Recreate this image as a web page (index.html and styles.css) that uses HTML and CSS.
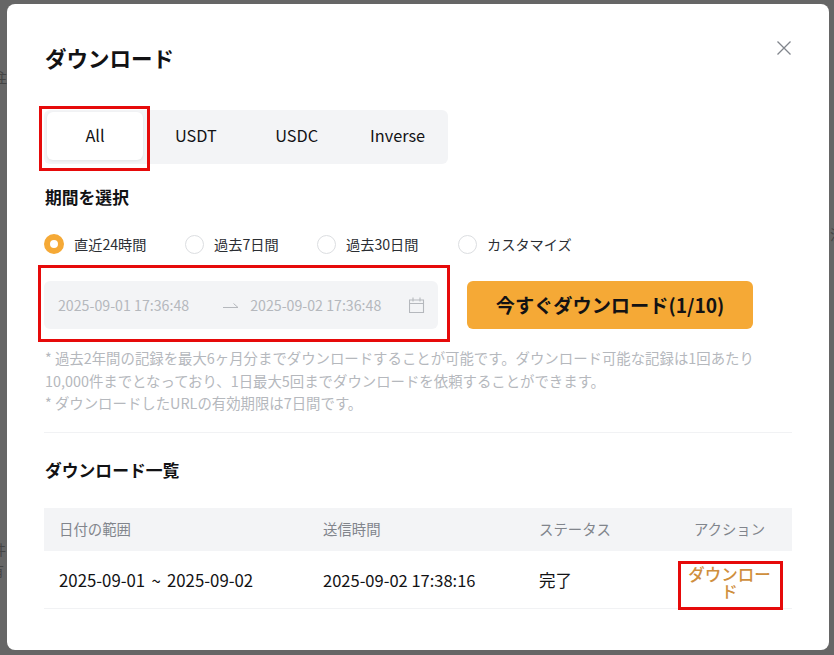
FILE: index.html
```html
<!DOCTYPE html>
<html lang="ja">
<head>
    <meta charset="UTF-8">
    <meta name="viewport" content="width=device-width, initial-scale=1.0">
    <title>ダウンロード</title>
    <link rel="stylesheet" href="styles.css">
</head>
<body>

<div class="backdrop-text text-a">注</div>
<div class="backdrop-text text-b">注</div>
<div class="backdrop-text text-c">件</div>
<div class="backdrop-text text-d">有</div>

<div class="modal">
    <button class="close" aria-label="閉じる">
        <svg width="16" height="16" viewBox="0 0 16 16"><path d="M1.5 1.5l13 13M14.500 1.500l-13 13" stroke="#81858c" stroke-width="1.300" fill="none"/></svg>
    </button>

    <h1 class="title">ダウンロード</h1>

    <div class="tabs">
        <div class="tab active">All</div>
        <div class="tab">USDT</div>
        <div class="tab">USDC</div>
        <div class="tab">Inverse</div>
    </div>

    <h2 class="section-label">期間を選択</h2>

    <div class="radios">
        <label class="radio radio-24"><span class="dot on"></span>直近24時間</label>
        <label class="radio radio-7"><span class="dot"></span>過去7日間</label>
        <label class="radio radio-30"><span class="dot"></span>過去30日間</label>
        <label class="radio"><span class="dot"></span>カスタマイズ</label>
    </div>

    <div class="range-row">
        <div class="range">
            <span class="range-date">2025-09-01 17:36:48</span>
            <svg class="range-arrow" width="16" height="8" viewBox="0 0 16 8"><path d="M0 6.500h15L10.500 2.500" stroke="#b5b8bd" fill="none"/></svg>
            <span class="range-date">2025-09-02 17:36:48</span>
            <svg class="range-cal" width="16" height="16" viewBox="0 0 16 16"><path d="M.5 3h14v12.500H.5zM.5 6.500h14M4 .5v4M11 .5v4" stroke="#b5b8bd" stroke-width="1.100" fill="none"/></svg>
        </div>
        <button class="download-now">今すぐダウンロード(1/10)</button>
    </div>

    <p class="note">* 過去2年間の記録を最大6ヶ月分までダウンロードすることが可能です。ダウンロード可能な記録は1回あたり<br>10,000件までとなっており、1日最大5回までダウンロードを依頼することができます。<br>* ダウンロードしたURLの有効期限は7日間です。</p>

    <div class="divider"></div>

    <h2 class="list-title">ダウンロード一覧</h2>

    <table class="history">
        <thead>
            <tr>
                <th class="col-range">日付の範囲</th>
                <th class="col-sent">送信時間</th>
                <th class="col-status">ステータス</th>
                <th class="col-action">アクション</th>
            </tr>
        </thead>
        <tbody>
            <tr>
                <td class="date-range">2025-09-01 ~ 2025-09-02</td>
                <td>2025-09-02 17:38:16</td>
                <td>完了</td>
                <td class="col-action"><a class="action-link">ダウンロード</a></td>
            </tr>
        </tbody>
    </table>
</div>

<!-- 赤枠の注釈 -->
<div class="mark mark-tab"></div>
<div class="mark mark-range"></div>
<div class="mark mark-action"></div>

</body>
</html>
```

FILE: styles.css
```css
html, body {
    height: 100%;
}
body {
    margin: 0;
    overflow: hidden;
    position: relative;
    background-color: #666;
    color: #121214;
    font-family: "Noto Sans CJK JP", "Noto Sans", sans-serif;
    padding: 4px 5px 5px 7px;
    box-sizing: border-box;
}
.backdrop-text {
    position: absolute;
    font-size: 14px;
    line-height: 18px;
    color: #444;
}
.text-a { left: -7px; top: 68px; }
.text-b { right: -10px; top: 225px; }
.text-c { left: -8px; top: 540px; }
.text-d { left: -10px; top: 561px; }

.modal {
    position: relative;
    height: 646px;
    box-sizing: border-box;
    padding: 34px 37px 0 37px;
    background-color: #fff;
    border-radius: 8px;
}
.close {
    position: absolute;
    top: 36px;
    right: 37px;
    padding: 0;
    border: none;
    background: none;
    cursor: pointer;
    line-height: 0;
}
.title {
    margin: 0 0 0 1px;
    font-size: 21.500px;
    line-height: 40px;
    font-weight: 700;
}
.tabs {
    display: flex;
    width: 404px;
    height: 54px;
    margin-top: 32px;
    padding: 2px 0 4px;
    box-sizing: border-box;
    background-color: #f3f4f6;
    border-radius: 6px;
}
.tab {
    flex: 1;
    display: flex;
    align-items: center;
    justify-content: center;
    padding-bottom: 2px;
    font-size: 16.300px;
    border-radius: 6px;
}
.active {
    flex: 0 0 96px;
    margin: 0 2.500px 0 3px;
    background-color: #fff;
    box-shadow: 0 1px 3px rgba(0, 0, 0, 0.08);
}
.section-label {
    margin: 21px 0 0 1px;
    font-size: 16.800px;
    line-height: 24px;
    font-weight: 700;
}
.radios {
    display: flex;
    margin-top: 25px;
    height: 20px;
}
.radio {
    display: flex;
    align-items: center;
    gap: 10px;
    font-size: 14.200px;
    color: #2b2e33;
}
.radio-24 { width: 141px; }
.radio-7 { width: 132px; }
.radio-30 { width: 141px; }
.dot {
    width: 19px;
    height: 19px;
    box-sizing: border-box;
    border: 1px solid #dcdee1;
    border-radius: 50%;
}
.dot.on {
    width: 20px;
    height: 20px;
    border: 6px solid #f5a936;
    background-color: #fff;
}
.range-row {
    display: flex;
    align-items: center;
    gap: 29px;
    margin-top: 27px;
}
.range {
    display: flex;
    align-items: center;
    width: 394px;
    height: 48px;
    padding: 0 13px 0 14px;
    box-sizing: border-box;
    background-color: #f3f4f6;
    border-radius: 6px;
    font-size: 14.200px;
    color: #b5b8bd;
}
.range-arrow {
    margin: 0 11px 0 34px;
}
.range-cal {
    margin-left: auto;
}
.download-now {
    width: 286px;
    height: 48px;
    padding: 0;
    border: none;
    border-radius: 6px;
    background-color: #f5a936;
    color: #121214;
    font-family: inherit;
    font-size: 19.200px;
    font-weight: 700;
    cursor: pointer;
}
.note {
    margin: 18px 0 0 1px;
    font-size: 14.400px;
    line-height: 22.500px;
    color: #b5b8bd;
}
.divider {
    height: 1px;
    margin-top: 17px;
    background-color: #f1f2f4;
}
.list-title {
    margin: 25px 0 0 1px;
    font-size: 16.800px;
    line-height: 24px;
    font-weight: 700;
}
.history {
    width: 748px;
    margin-top: 26px;
    border-collapse: collapse;
    table-layout: fixed;
    font-size: 16.500px;
}
.history th {
    height: 41px;
    padding: 0 0 2px 15px;
    background-color: #f3f4f6;
    color: #81858c;
    font-size: 14.400px;
    font-weight: 400;
    text-align: left;
}
.history tbody tr {
    height: 58px;
}
.history td {
    padding: 2px 0 0 15px;
    border-bottom: 1px solid #f1f2f4;
}
.history td.date-range {
    font-size: 16.800px;
    word-spacing: 2.500px;
}
.col-range { width: 249px; }
.col-sent { width: 201px; }
.col-status { width: 125px; }
.history th.col-action {
    padding: 0 17px 2px 20px;
    text-align: center;
}
.history td.col-action {
    padding: 7px 17px 0 20px;
    text-align: center;
}
.action-link {
    display: block;
    line-height: 16.500px;
    font-weight: 500;
    color: #cf8f3d;
}
.mark {
    position: absolute;
    box-sizing: border-box;
    border: 3px solid #e60a0a;
}
.mark-tab { left: 39px; top: 106px; width: 111px; height: 65px; }
.mark-range { left: 38px; top: 265px; width: 412px; height: 77px; }
.mark-action { left: 678px; top: 561px; width: 105px; height: 49px; }
```
